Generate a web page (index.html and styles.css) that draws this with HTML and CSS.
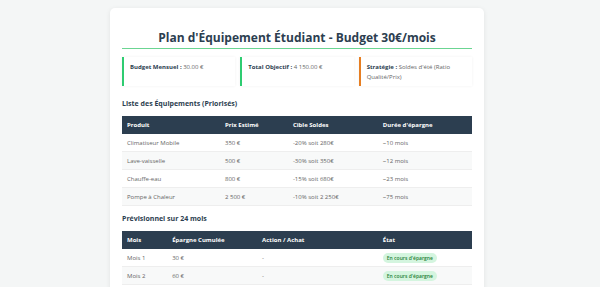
FILE: index.html
```html
<!DOCTYPE html>
<html lang="fr">
<head>
<meta charset="utf-8">
<title>Plan d'Équipement Étudiant</title>
<link rel="stylesheet" href="styles.css">
</head>
<body>
<div class="card">
  <h1 class="title">Plan d'Équipement Étudiant - Budget 30€/mois</h1>
  <div class="summary">
    <div class="info info-green"><strong>Budget Mensuel :</strong> 30.00 €</div>
    <div class="info info-green"><strong>Total Objectif :</strong> 4 150.00 €</div>
    <div class="info info-orange"><strong>Stratégie :</strong> Soldes d'été (Ratio Qualité/Prix)</div>
  </div>

  <h2 class="section">Liste des Équipements (Priorisés)</h2>
  <table class="tbl tbl-items">
    <thead>
      <tr><th>Produit</th><th>Prix Estimé</th><th>Cible Soldes</th><th>Durée d'épargne</th></tr>
    </thead>
    <tbody>
      <tr><td>Climatiseur Mobile</td><td>350 €</td><td>-20% soit 280€</td><td>~10 mois</td></tr>
      <tr><td>Lave-vaisselle</td><td>500 €</td><td>-30% soit 350€</td><td>~12 mois</td></tr>
      <tr><td>Chauffe-eau</td><td>800 €</td><td>-15% soit 680€</td><td>~23 mois</td></tr>
      <tr><td>Pompe à Chaleur</td><td>2 500 €</td><td>-10% soit 2 250€</td><td>~75 mois</td></tr>
    </tbody>
  </table>

  <h2 class="section section-second">Prévisionnel sur 24 mois</h2>
  <table class="tbl tbl-plan">
    <thead>
      <tr><th>Mois</th><th>Épargne Cumulée</th><th>Action / Achat</th><th>État</th></tr>
    </thead>
    <tbody>
      <tr><td>Mois 1</td><td>30 €</td><td>-</td><td><span class="badge">En cours d'épargne</span></td></tr>
      <tr><td>Mois 2</td><td>60 €</td><td>-</td><td><span class="badge">En cours d'épargne</span></td></tr>
      <tr><td>Mois 3</td><td>90 €</td><td>-</td><td><span class="badge">En cours d'épargne</span></td></tr>
    </tbody>
  </table>
</div>
</body>
</html>
```

FILE: styles.css
```css
html, body {
  margin: 0;
  padding: 0;
}
body {
  background: #f4f6f6;
  font-family: "Open Sans", "Noto Sans", sans-serif;
  color: #555;
  padding: 8px 10px 20px 4px;
}
.card {
  width: 350px;
  margin: 0 auto;
  background: #fff;
  border-radius: 5px;
  box-shadow: 0 1px 5px rgba(0,0,0,0.08);
  padding: 20px 12px 12px;
}
.title {
  margin: 0;
  text-align: center;
  font-size: 12px;
  font-weight: 700;
  color: #2c3e50;
  line-height: 20px;
  padding: 0;
  border-bottom: 1px solid #6bd592;
}
.summary {
  display: grid;
  grid-template-columns: 1fr 1fr 1fr;
  gap: 5px;
  margin-top: 8px;
  margin-bottom: 13px;
}
.info {
  background: #fff;
  box-shadow: 0 0 3px rgba(0,0,0,0.06);
  padding: 5px 6px 4px;
  font-size: 6px;
  line-height: 10px;
  min-height: 20px;
  color: #666;
}
.info strong {
  color: #2c3e50;
}
.info-green { border-left: 2px solid #2ecc71; }
.info-orange { border-left: 2px solid #e67e22; }
.section {
  margin: 0 0 7px;
  font-size: 7px;
  line-height: 10px;
  font-weight: 700;
  color: #2c3e50;
}
.section-second {
  margin-top: 8px;
}
.tbl {
  width: 100%;
  border-collapse: collapse;
  font-size: 6px;
}
.tbl th {
  background: #2c3e50;
  color: #fff;
  font-weight: 700;
  text-align: left;
  height: 18px;
  padding: 0 5px;
}
.tbl td {
  height: 17px;
  padding: 0 5px;
  border-bottom: 1px solid #eee;
  color: #666;
}
.tbl tbody tr:nth-child(even) td {
  background: #f8f9f9;
}
.tbl-items th:nth-child(1) { width: 28%; }
.tbl-items th:nth-child(2) { width: 19.4%; }
.tbl-items th:nth-child(3) { width: 25.7%; }
.tbl-items th:nth-child(4) { width: 26.9%; }
.tbl-plan th:nth-child(1) { width: 12.9%; }
.tbl-plan th:nth-child(2) { width: 25.7%; }
.tbl-plan th:nth-child(3) { width: 34.5%; }
.tbl-plan th:nth-child(4) { width: 26.9%; }
.badge {
  display: inline-block;
  background: #d4f5df;
  color: #1e7e34;
  font-size: 5px;
  font-weight: 600;
  line-height: 10px;
  padding: 0 4px;
  border-radius: 5px;
}
```
